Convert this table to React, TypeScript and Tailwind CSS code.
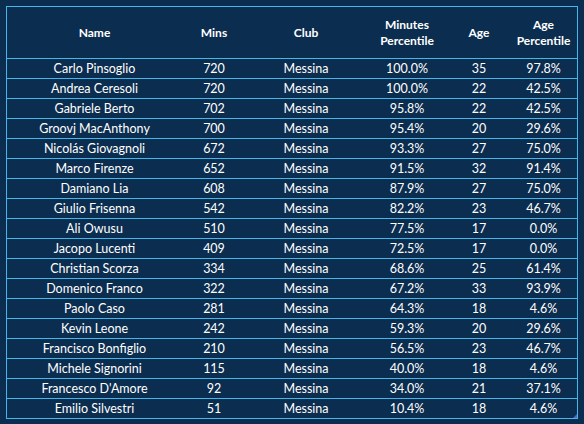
import React from "react";

const rows: [string, string, string, string, string, string][] = [
  ["Carlo Pinsoglio", "720", "Messina", "100.0%", "35", "97.8%"],
  ["Andrea Ceresoli", "720", "Messina", "100.0%", "22", "42.5%"],
  ["Gabriele Berto", "702", "Messina", "95.8%", "22", "42.5%"],
  ["Groovj MacAnthony", "700", "Messina", "95.4%", "20", "29.6%"],
  ["Nicolás Giovagnoli", "672", "Messina", "93.3%", "27", "75.0%"],
  ["Marco Firenze", "652", "Messina", "91.5%", "32", "91.4%"],
  ["Damiano Lia", "608", "Messina", "87.9%", "27", "75.0%"],
  ["Giulio Frisenna", "542", "Messina", "82.2%", "23", "46.7%"],
  ["Ali Owusu", "510", "Messina", "77.5%", "17", "0.0%"],
  ["Jacopo Lucenti", "409", "Messina", "72.5%", "17", "0.0%"],
  ["Christian Scorza", "334", "Messina", "68.6%", "25", "61.4%"],
  ["Domenico Franco", "322", "Messina", "67.2%", "33", "93.9%"],
  ["Paolo Caso", "281", "Messina", "64.3%", "18", "4.6%"],
  ["Kevin Leone", "242", "Messina", "59.3%", "20", "29.6%"],
  ["Francisco Bonfiglio", "210", "Messina", "56.5%", "23", "46.7%"],
  ["Michele Signorini", "115", "Messina", "40.0%", "18", "4.6%"],
  ["Francesco D'Amore", "92", "Messina", "34.0%", "21", "37.1%"],
  ["Emilio Silvestri", "51", "Messina", "10.4%", "18", "4.6%"],
];

const cols = "grid grid-cols-[175px_64px_120px_82px_62px_67px]";

export default function App() {
  return (
    <div
      className="w-[584px] h-[424px] bg-[#0b2d4f] pt-[6px] pl-[6px] text-white"
      style={{ fontFamily: "Lato, 'Noto Sans', sans-serif" }}
    >
      <div className="relative w-[572px] border border-[#45b6e8]">
        <div className={`${cols} h-[51px] items-center text-center text-[12px] font-bold leading-[16px]`}>
          <div>Name</div>
          <div>Mins</div>
          <div>Club</div>
          <div>
            Minutes
            <br />
            Percentile
          </div>
          <div>Age</div>
          <div>
            Age
            <br />
            Percentile
          </div>
        </div>
        {rows.map((r, i) => (
          <div
            key={i}
            className={`${cols} h-[20px] border-t border-[#45b6e8] items-center text-center text-[12.5px] leading-[19px]`}
          >
            {r.map((c, j) => (
              <div key={j}>{c}</div>
            ))}
          </div>
        ))}
        <div className="absolute right-0 bottom-0 w-0 h-0 border-l-[4px] border-l-transparent border-b-[4px] border-b-[#5a5fd0]" />
      </div>
    </div>
  );
}
